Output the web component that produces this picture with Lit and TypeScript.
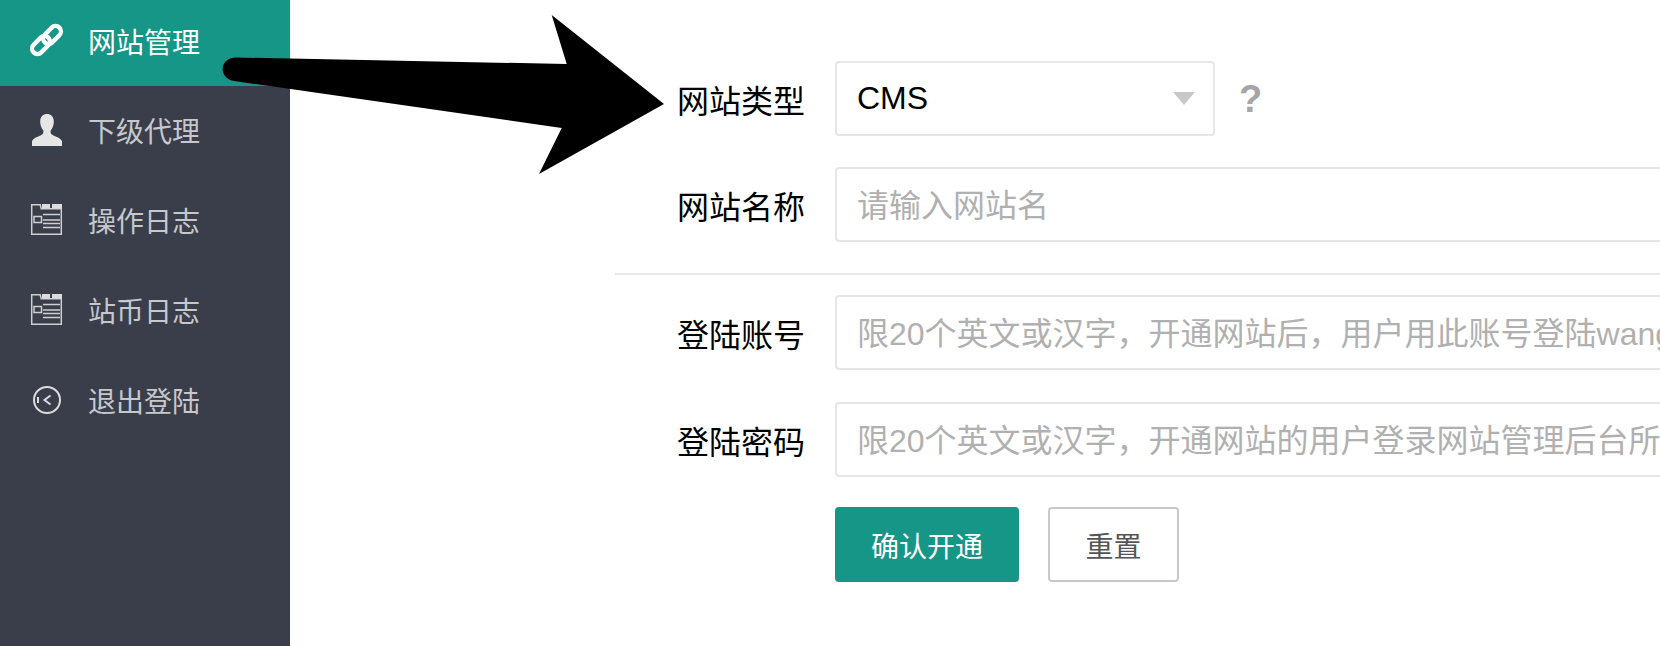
import { LitElement, html, css } from "lit";
import { customElement } from "lit/decorators.js";

const linkIcon = html`<svg class="ico" viewBox="0 0 36 36"><g fill="none" stroke="#fff" stroke-width="4.4">
<rect x="-10.400" y="-5.400" width="20.800" height="10.800" rx="5.400" transform="translate(11 22) rotate(-45)"/>
<rect x="-10.400" y="-5.400" width="20.800" height="10.800" rx="5.400" transform="translate(22 12) rotate(-45)"/>
</g></svg>`;
const userIcon = html`<svg class="ico" viewBox="0 0 36 36"><path fill="#e6e6e6" d="M17 2c-4 0-6.800 2.600-6.800 7.500 0 3.400 1 6.600 3 8.800 0.500 2.200 0.200 3.600-1.500 4.500C9 24.500 3.400 26 2 29v5h30v-5c-1.400-3-7-4.500-9.700-6.200-1.700-0.900-2-2.300-1.500-4.500 2-2.200 3-5.400 3-8.800C23.800 4.600 21 2 17 2z"/></svg>`;
const logIcon = html`<svg class="ico" viewBox="0 0 36 36"><g fill="none" stroke="#cfcfcf" stroke-width="1.500">
<path d="M1.700 32.300V2.700h8.500l1 4H31.300v25.600z"/>
<rect x="4" y="14.500" width="7.500" height="6"/>
<path d="M13 12.500h17M13 18h17M13 21.500h17M13 25.500h17"/></g>
<path fill="#dcdcdc" d="M12 2h8v4.500h-8zM22 2h10v4.500H22z"/></svg>`;
const exitIcon = html`<svg class="ico" viewBox="0 0 36 36"><g fill="none" stroke="#dcdcdc" stroke-width="2">
<circle cx="17" cy="18" r="13"/><path d="M20.500 13.500l-6 4.500 6 4.500M8 15v6"/></g></svg>`;

const nav = [
  { label: "网站管理", icon: linkIcon, active: true },
  { label: "下级代理", icon: userIcon },
  { label: "操作日志", icon: logIcon },
  { label: "站币日志", icon: logIcon },
  { label: "退出登陆", icon: exitIcon },
];

@customElement("app-root")
export class AppRoot extends LitElement {
  static styles = css`
    :host {
      display: block;
      position: relative;
      width: 1660px;
      height: 646px;
      overflow: hidden;
      background: #fff;
      font-family: "Liberation Sans", "Noto Sans CJK SC", sans-serif;
    }
    .page { display: flex; height: 646px; }
    .side { width: 290px; flex: none; background: #3a3d4a; }
    .item {
      height: 90px;
      box-sizing: border-box;
      display: flex;
      align-items: center;
      padding: 0 0 2px 30px;
      gap: 22px;
      font-size: 28px;
      color: #c6c8cc;
    }
    .item.active { height: 86px; padding-bottom: 4px; background: #169686; color: #fff; }
    .ico { width: 36px; height: 36px; flex: none; }
    .main { flex: 1; min-width: 0; overflow: hidden; padding: 61px 0 0 325px; }
    .row { display: grid; grid-template-columns: 190px 900px; column-gap: 30px; align-items: center; margin-bottom: 31px; }
    .row.account { margin-bottom: 32px; }
    .row.password { margin-bottom: 30px; }
    label { text-align: right; font-size: 32px; color: #000; }
    .field {
      height: 75px;
      box-sizing: border-box;
      border: 2px solid #e6e6e6;
      border-radius: 4px;
      font-size: 32px;
      color: #b0b0b0;
      display: flex;
      align-items: center;
      padding: 0 0 3px 20px;
      white-space: nowrap;
      overflow: hidden;
      background: #fff;
    }
    .sel-wrap { display: flex; align-items: center; gap: 24px; }
    .select { width: 380px; color: #000; justify-content: space-between; padding: 0 18px 0 20px; }
    .caret { width: 0; height: 0; border-left: 11px solid transparent; border-right: 11px solid transparent; border-top: 13px solid #c8c8c8; }
    .help { font-size: 38px; font-weight: 700; color: #a6a6a6; line-height: 1; }
    hr { border: 0; height: 2px; background: #e6e6e6; margin: 0 0 20px; }
    .btns { display: flex; gap: 29px; margin-left: 220px; }
    button {
      font: inherit;
      font-size: 28px;
      height: 75px;
      box-sizing: border-box;
      border-radius: 4px;
      padding: 0;
      background: #fff;
    }
    .ok { width: 184px; background: #169686; color: #fff; border: 0; }
    .reset { width: 131px; color: #555; border: 2px solid #c8c8c8; }
    .arrow { position: absolute; left: 0; top: 0; width: 700px; height: 200px; pointer-events: none; }
  `;

  render() {
    return html`
      <div class="page">
        <nav class="side">
          ${nav.map(
            (n) => html`<div class="item ${n.active ? "active" : ""}">${n.icon}<span>${n.label}</span></div>`
          )}
        </nav>
        <div class="main">
          <div class="row">
            <label>网站类型</label>
            <div class="sel-wrap">
              <div class="field select"><span>CMS</span><i class="caret"></i></div>
              <span class="help">?</span>
            </div>
          </div>
          <div class="row">
            <label>网站名称</label>
            <div class="field">请输入网站名</div>
          </div>
          <hr />
          <div class="row account">
            <label>登陆账号</label>
            <div class="field">限20个英文或汉字，开通网站后，用户用此账号登陆wang</div>
          </div>
          <div class="row password">
            <label>登陆密码</label>
            <div class="field">限20个英文或汉字，开通网站的用户登录网站管理后台所</div>
          </div>
          <div class="btns">
            <button class="ok">确认开通</button>
            <button class="reset">重置</button>
          </div>
        </div>
      </div>
      <svg class="arrow" viewBox="0 0 700 200">
        <path fill="#000" d="M236 57.500 L566.700 64 L551.700 15 L664 104 L539 174 L561.700 128 L234 81 C228 80 222.700 76 222.700 69 C222.700 62 229 57.400 236 57.500 Z"/>
      </svg>
    `;
  }
}
